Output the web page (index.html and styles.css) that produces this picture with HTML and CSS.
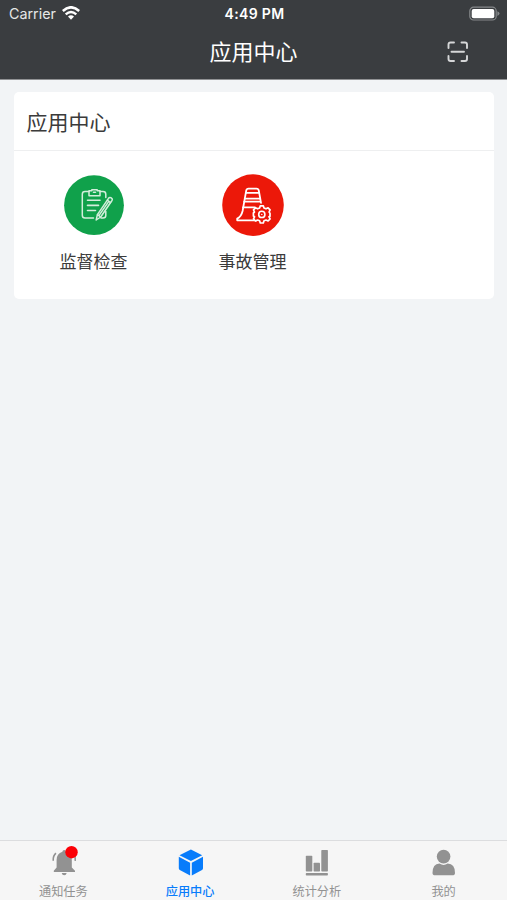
FILE: index.html
```html
<!DOCTYPE html>
<html lang="zh-CN">
<head>
<meta charset="utf-8">
<title>应用中心</title>
<link rel="stylesheet" href="styles.css">
</head>
<body>
<div class="screen">
  <header class="header">
    <div class="status">
      <div class="carrier">
        <span>Carrier</span>
        <svg class="wifi" viewBox="0 0 18 14" width="18" height="14">
          <path d="M.8 5Q9-2.4 17.2 5" fill="none" stroke="#fff" stroke-width="2.6"/>
          <path d="M3.7 8.3Q9 3.5 14.3 8.3" fill="none" stroke="#fff" stroke-width="2.4"/>
          <path d="M6 10.6Q9 8 12 10.6L9 13.7Z" fill="#fff"/>
        </svg>
      </div>
      <div class="time">4:49 PM</div>
      <svg class="battery" viewBox="0 0 31 16" width="31" height="16">
        <rect x=".8" y="1.2" width="26.4" height="12.8" rx="3.8" fill="none" stroke="#85888a" stroke-width="1.2"/>
        <rect x="2.7" y="3" width="22.6" height="9.2" rx="2" fill="#fff"/>
        <path d="M28.4 5.3Q30.5 6.2 30.5 7.6T28.4 9.9Z" fill="#85888a"/>
      </svg>
    </div>
    <div class="navbar">
      <h1 class="title">应用中心</h1>
      <svg class="scan" viewBox="0 0 22 22" width="22" height="22" fill="none" stroke="#d6d7d8" stroke-width="1.9" stroke-linecap="round">
        <path d="M1.5 7V3.5Q1.5 1.5 3.5 1.5H7M14.5 1.5H18Q20 1.5 20 3.5V7M20 15V18Q20 20 18 20H14.5M7 20H3.5Q1.5 20 1.5 18V15M4.5 10.7H17"/>
      </svg>
    </div>
  </header>

  <main class="content">
    <section class="card">
      <h2 class="card-title">应用中心</h2>
      <div class="apps">
        <div class="app">
          <svg class="app-icon" viewBox="0 0 62 62" width="62" height="62" fill="none" stroke="#d3eedb" stroke-width="1.5" stroke-linecap="round" stroke-linejoin="round">
            <circle cx="31" cy="31.2" r="29.9" fill="#10a14b" stroke="none"/>
            <path d="M26 17.5H22Q19.3 17.5 19.3 20.2V41.2Q19.3 44 22 44H30.5M37 17.5H40Q42.8 17.5 42.8 20.2V23.5M42.8 37.5V41.5Q42.8 44 40 44H38"/>
            <path d="M26 16.8H28.8V15.8H34.2V16.8H37V21.7H26Z"/>
            <path d="M30.5 18.3H32.5M24.5 26.3H37M24.5 31.4H35.5M24.5 36.5H32.5" stroke-width="1.6"/>
            <path d="M33.2 46L34.4 40.6L45.5 24.3Q46.5 23 47.8 23.7L49 24.6Q49.7 25.4 49 26.5L37.7 43Z" fill="#10a14b"/>
            <path d="M34.5 40.7L37.5 43M44.3 26.2L47.5 28.6M36.4 40.9L45.8 27.4"/>
          </svg>
          <span class="app-name">监督检查</span>
        </div>
        <div class="app">
          <svg class="app-icon" viewBox="0 0 62 62" width="62" height="62" fill="none" stroke="#fff" stroke-width="1.8" stroke-linecap="round" stroke-linejoin="round">
            <circle cx="31" cy="31.1" r="30.8" fill="#ec1809" stroke="none"/>
            <path d="M34.5 46.3H15.2V44.6Q19.2 42.8 20.6 37L24.2 16.6Q24.6 14.6 26.5 14.6H34.5Q36.4 14.6 36.8 16.6L39 28.8"/>
            <path d="M24 18.9H37M23 24.7H37.8M22.2 27.6H38.2M21 33.4H33"/>
            <path d="M38.3 31.8H41.3L42 34L44 34.8L46.1 33.8L48.1 35.9L47.1 38L48 39.4V42.2L47 42.8L48.1 44.9L46.1 47L44 46L42 46.8L41.3 49H38.3L37.6 46.8L35.6 46L33.5 47L31.5 44.9L32.5 42.8L31.4 42V39L32.5 38L31.5 35.9L33.5 33.8L35.6 34.8L37.6 34Z" fill="#ec1809" stroke-width="1.7"/>
            <circle cx="39.8" cy="40.4" r="3.1" stroke-width="1.6"/>
            <circle cx="39.8" cy="40.4" r=".7" fill="#fff" stroke="none"/>
          </svg>
          <span class="app-name">事故管理</span>
        </div>
      </div>
    </section>
  </main>

  <nav class="tabs">
    <div class="tab">
      <svg class="tab-icon" viewBox="0 0 30 30" width="30" height="30">
        <path d="M16.2 4Q17.8 4 18 5.7Q23.8 7.4 23.8 14V21.4L27 24.7V26H5.8V24.7L8.6 21.4V14Q8.6 7.4 14.4 5.7Q14.6 4 16.2 4ZM13.7 27H18.7Q18.2 29.3 16.2 29.3T13.7 27Z" fill="#929292"/>
        <path d="M7.9 7.2Q4.9 10 5.2 14.8M24.7 7.2Q27.7 10 27.2 14.8" fill="none" stroke="#929292" stroke-width="1.6"/>
        <circle cx="23.5" cy="6.2" r="6.2" fill="#fb0006"/>
      </svg>
      <span class="tab-name">通知任务</span>
    </div>
    <div class="tab active">
      <svg class="tab-icon" viewBox="0 0 30 30" width="30" height="30">
        <path d="M15.9 3.6L27.2 9.3L15.9 15.1L4.5 9.3ZM3.8 10.8L15.1 16.7V29.6L4.8 24Q3.8 23.4 3.8 22.3ZM28 10.8L16.8 16.7V29.6L27 24Q28 23.4 28 22.3Z" fill="#087cfb"/>
      </svg>
      <span class="tab-name">应用中心</span>
    </div>
    <div class="tab">
      <svg class="tab-icon" viewBox="0 0 30 30" width="30" height="30" fill="#929292">
        <rect x="3.8" y="9.7" width="6.5" height="15.8" rx=".7"/>
        <rect x="11.6" y="16.7" width="6.4" height="8.8" rx=".7"/>
        <rect x="19.3" y="4" width="6.6" height="21.5" rx=".7"/>
        <rect x="3.8" y="27" width="22.1" height="2.4" rx=".7"/>
      </svg>
      <span class="tab-name">统计分析</span>
    </div>
    <div class="tab">
      <svg class="tab-icon" viewBox="0 0 30 30" width="30" height="30" fill="#929292">
        <circle cx="14.6" cy="10.6" r="6.8"/>
        <path d="M3.5 27Q3.5 18 10.5 17.6Q14.6 20.2 18.7 17.6Q26 18 26 27Q26 29.3 23.3 29.3H6.2Q3.5 29.3 3.5 27Z"/>
      </svg>
      <span class="tab-name">我的</span>
    </div>
  </nav>
</div>
</body>
</html>
```
FILE: styles.css
```css
* {
  box-sizing: border-box;
}

body {
  margin: 0;
  font-family: "Noto Sans CJK SC", sans-serif;
  color: #3b3b3b;
}

.screen {
  display: flex;
  flex-direction: column;
  height: 900px;
  background: #f2f4f6;
}

.header {
  height: 80px;
  background: #3a3d40;
  border-bottom: 1px solid #909294;
  color: #fff;
}

.status {
  display: grid;
  grid-template-columns: 1fr auto 1fr;
  align-items: center;
  height: 27px;
  padding: 0 7px 0 9px;
  font-family: Inter, sans-serif;
}

.carrier {
  display: flex;
  gap: 6px;
  align-items: center;
  font-size: 14.3px;
  color: #e6e7e7;
}

.wifi {
  margin-top: -1px;
}

.time {
  font-size: 14px;
  font-weight: 600;
  letter-spacing: .35px;
}

.battery {
  justify-self: end;
}

.navbar {
  display: grid;
  grid-template-columns: 1fr auto 1fr;
  align-items: center;
  height: 50px;
}

.title {
  grid-column: 2;
  margin: 0;
  padding-bottom: 4px;
  font-size: 22px;
  line-height: 32px;
  font-weight: 400;
}

.scan {
  justify-self: end;
  margin-right: 38px;
}

.content {
  flex: 1;
  padding: 12px 13px 0 14px;
}

.card {
  height: 207px;
  background: #fff;
  border-radius: 5px;
}

.card-title {
  margin: 0;
  height: 59px;
  padding-left: 12.5px;
  border-bottom: 1px solid #eeeff0;
  font-size: 21px;
  font-weight: 400;
  line-height: 58px;
}

.apps {
  display: grid;
  grid-template-columns: repeat(3, 159px);
  padding-top: 23px;
}

.app {
  display: flex;
  flex-direction: column;
  align-items: center;
}

.app-name {
  margin-top: 12px;
  font-size: 17px;
  line-height: 25px;
}

.tabs {
  display: grid;
  grid-template-columns: repeat(4, 1fr);
  height: 60px;
  padding-top: 5px;
  background: #f6f6f6;
  border-top: 1px solid #dcdddf;
}

.tab {
  display: flex;
  flex-direction: column;
  align-items: center;
  color: #929292;
}

.tab-name {
  margin-top: 6px;
  font-size: 12.2px;
  line-height: 18px;
}

.active {
  color: #087cfb;
}

.active .tab-name {
  font-weight: 500;
}
```
